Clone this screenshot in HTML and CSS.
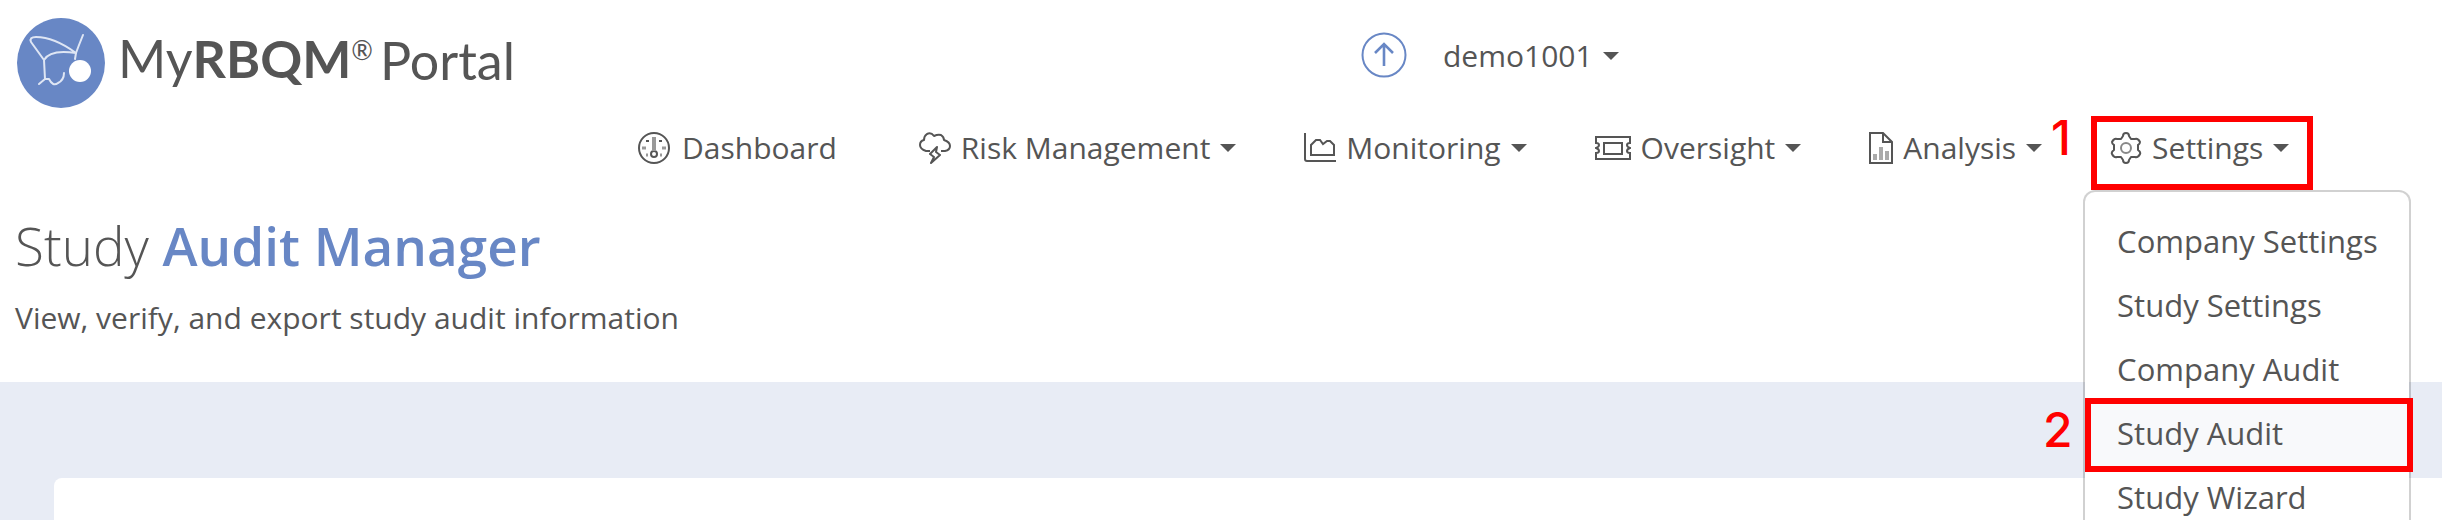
FILE: index.html
```html
<!DOCTYPE html>
<html lang="en">
<head>
<meta charset="utf-8">
<title>Study Audit Manager</title>
<link rel="stylesheet" href="styles.css">
</head>
<body>
<header class="header">
  <div class="topbar">
    <a class="brand" href="#" aria-label="MyRBQM Portal">
      <svg class="brand-mark" viewBox="0 0 90 92" aria-hidden="true">
        <ellipse cx="45" cy="46" rx="44" ry="45" fill="#6887c5"/>
        <g fill="none" stroke="#dfe6f4" stroke-width="2" stroke-linecap="round" stroke-linejoin="round">
          <path d="M28 43 L15 25 Q13 20 20 20 Q38 20 60 36 Q34 32 28 43 L29 62 L23 67"/>
          <path d="M67 18 L63 28 L60 36 L59 42"/>
          <path d="M29 62 L33 62 Q37 70 42 66 Q48 63 48 56"/>
        </g>
        <circle cx="64" cy="54" r="11" fill="#fff"/>
      </svg>
      <span class="brand-text">My<b>RBQM</b><sup>®</sup></span>
      <span class="brand-portal">Portal</span>
    </a>
    <div class="account">
      <button class="upload" type="button" aria-label="Upload">
        <svg viewBox="0 0 46 46" fill="none" stroke="#6887c5" stroke-width="2"><circle cx="23" cy="23" r="21.5"/><path d="M23 34V12M14 21l9-9 9 9" stroke-width="2.6"/></svg>
      </button>
      <button class="menu-button" type="button">demo1001<span class="caret"></span></button>
    </div>
  </div>
  <nav class="nav">
    <a class="nav-item dashboard" href="#">
      <svg viewBox="0 0 32 32" width="32" height="32" fill="none" stroke="#555" stroke-width="2"><circle cx="16" cy="16" r="15"/><circle cx="16" cy="22" r="3"/><path d="M16 19V5" stroke="#999" stroke-width="4"/><path d="M8 9h3M21 9h3"/><path d="M4 16h4M24 16h4M8 23h2M22 23h2" stroke="#999" stroke-width="3"/></svg>
      <span>Dashboard</span></a>
    <button class="nav-item" type="button">
      <svg viewBox="0 0 32 32" width="32" height="32" fill="none" stroke="#555" stroke-width="2" stroke-linejoin="round"><path d="M11 19H7Q1 17 1 13Q1 9 5 8Q5 4 8 2Q12 0 15 4Q19 2 22 3Q25 5 25 8Q31 10 31 14Q31 18 26 19H22M18 15l-7 7 4 3-3 6 9-8-4-3z"/></svg>
      <span>Risk Management</span><span class="caret"></span></button>
    <button class="nav-item" type="button">
      <svg viewBox="0 0 32 32" width="32" height="32" fill="none" stroke="#555" stroke-width="2"><path d="M1 1v26q0 2 2 2h29M7 23V13l5-5h4l3 4 4-3h3l4 4v10z"/></svg>
      <span>Monitoring</span><span class="caret"></span></button>
    <button class="nav-item" type="button">
      <svg viewBox="0 0 36 32" width="36" height="32" fill="none" stroke="#555" stroke-width="2"><path d="M1 5h34v6q-3 0-3 2t3 3q-3 1-3 3t3 2v6H1v-6q3 0 3-2t-3-3q3-1 3-3t-3-2zM9 11h18v11H9z"/></svg>
      <span>Oversight</span><span class="caret"></span></button>
    <button class="nav-item" type="button">
      <svg viewBox="0 0 24 32" width="24" height="32" fill="none" stroke="#555" stroke-width="2"><path d="M1 1h13l9 9v21H1zM14 1v9h9"/><path d="M6 28v-6M12 28V15M18 28v-9" stroke-width="4" stroke="#aaa"/></svg>
      <span>Analysis</span><span class="caret"></span></button>
    <div class="settings">
      <button class="nav-item" type="button" aria-expanded="true">
        <svg viewBox="0 0 32 32" width="32" height="32" fill="none" stroke="#555" stroke-width="2" stroke-linejoin="round"><path d="M13 4q0-3 3-3t3 3l2 3 4 0q3-1 5 3q0 2-2 3v5q3 2 2 4-2 4-5 3l-4 0-2 3q0 3-3 3t-3-3l-2-3-4 0q-3 1-5-3q-1-2 2-4v-5q-2-1-2-3 2-4 5-3l4 0z"/><circle cx="16" cy="16" r="5" stroke="#888"/></svg>
        <span>Settings</span><span class="caret"></span></button>
      <span class="step-box step-box-one"></span><span class="step step-one">1</span>
      <div class="dropdown">
        <a href="#">Company Settings</a>
        <a href="#">Study Settings</a>
        <a href="#">Company Audit</a>
        <a class="active" href="#">Study Audit<span class="step-box step-box-two"></span><span class="step step-two">2</span></a>
        <a href="#">Study Wizard</a>
      </div>
    </div>
  </nav>
</header>
<main>
  <div class="intro">
    <h1>Study <b>Audit Manager</b></h1>
    <p>View, verify, and export study audit information</p>
  </div>
  <div class="content"><section class="card"></section></div>
</main>
</body>
</html>
```

FILE: styles.css
```css
* { box-sizing: border-box; }
body {
  margin: 0;
  height: 100vh;
  overflow: hidden;
  display: flex;
  flex-direction: column;
  background: #fff;
  color: #555;
  font: 30px/48px "Open Sans", "Noto Sans", sans-serif;
}
a { color: inherit; text-decoration: none; }
button { font: inherit; color: inherit; background: none; border: 0; padding: 0; }
svg { display: block; flex: none; }
.topbar { display: flex; padding: 17px 16px 9px; align-items: flex-start; }
.brand { display: flex; flex: 0 0 1345px; font: 52px/64px Lato, sans-serif; }
.brand-mark { width: 90px; height: 92px; margin-right: 12px; }
.brand-text { padding-top: 9px; }
.brand-text b { font-weight: 700; }
.brand-text sup { font-size: 26px; line-height: 0; }
.brand-portal { padding: 11px 0 0 7px; }
.account { display: flex; align-items: center; gap: 36px; padding-top: 12px; }
.upload { width: 46px; height: 46px; }
.menu-button, .nav-item { display: flex; align-items: center; white-space: nowrap; }
.menu-button { padding-top: 3px; }
.caret { margin-left: 10px; border: 8px solid transparent; border-top-color: #555; border-bottom: 0; }
.nav { display: flex; gap: 68px; padding-left: 638px; }
.nav-item { gap: 10px; height: 60px; }
.nav-item .caret { margin-left: 0; }
.dashboard { gap: 12px; margin-right: 14px; }
.settings { position: relative; }
.dropdown {
  position: absolute;
  z-index: 2;
  left: -27px;
  top: 72px;
  width: 328px;
  padding: 18px 0;
  background: #fff;
  border: 2px solid rgba(0, 0, 0, .18);
  border-radius: 12px;
  background-clip: padding-box;
  font-size: 31px;
  white-space: nowrap;
}
.dropdown a { position: relative; display: block; height: 64px; padding: 0 32px; line-height: 62px; }
.dropdown .active { background: #f8f9fb; }
.step-box { position: absolute; z-index: 3; border: 6px solid #f00; }
.step-box-one { left: -19px; top: -2px; width: 222px; height: 74px; }
.step-box-two { left: 0; right: -4px; top: -4px; height: 74px; }
.step { position: absolute; color: #f00; font: 500 48px/48px Inter, sans-serif; }
.step-one { left: -59px; top: -4px; }
.step-two { left: -42px; top: 4px; }
.intro { padding: 32px 15px 40px; }
h1 { margin: 0; font-size: 53px; line-height: 72px; font-weight: 300; }
h1 b { color: #6887c5; font-weight: 600; }
.intro p { margin: 12px 0 0; }
main { flex: 1; display: flex; flex-direction: column; }
.content { flex: 1; display: flex; padding: 96px 0 0 54px; background: #e8ecf5; }
.card { flex: 1; background: #fff; border-top-left-radius: 8px; }
```
